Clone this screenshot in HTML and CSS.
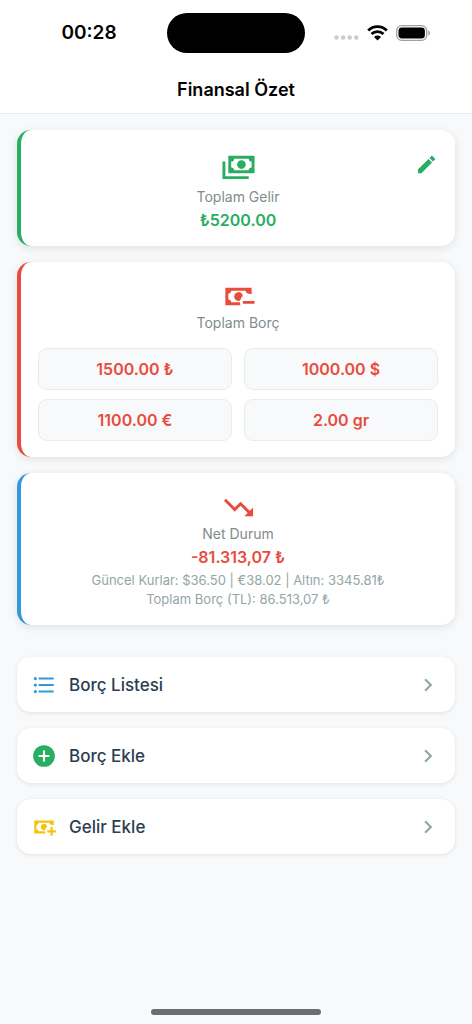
FILE: index.html
```html
<!DOCTYPE html>
<html lang="tr">
<head>
    <meta charset="UTF-8">
    <meta name="viewport" content="width=device-width, initial-scale=1.0">
    <title>Finansal Özet</title>
    <link rel="stylesheet" href="styles.css">
</head>
<body>
    <div class="status-bar">
        <span class="time">00:28</span>
        <span class="island"></span>
        <div class="status-icons">
            <svg class="signal" viewBox="0 0 25 5" width="25" height="5">
                <circle cx="2.5" cy="2.5" r="2.2"/>
                <circle cx="9.1" cy="2.5" r="2.2"/>
                <circle cx="15.7" cy="2.5" r="2.2"/>
                <circle cx="22.3" cy="2.5" r="2.2"/>
            </svg>
            <svg class="wifi" viewBox="0 0 21 16" width="21" height="16">
                <path d="M1.2 5.4a13.2 13.2 0 0 1 18.6 0M4.5 9a8.6 8.6 0 0 1 12 0"/>
                <path class="wifi-dot" d="M7 11.9a5 5 0 0 1 7 0L10.5 15.6z"/>
            </svg>
            <svg class="battery" viewBox="0 0 35 16" width="35" height="16">
                <rect class="battery-frame" x=".7" y=".7" width="30" height="14.6" rx="5"/>
                <rect x="2.5" y="2.5" width="26.4" height="11" rx="3.4"/>
                <path class="battery-cap" d="M32.3 5.3v5.4c2.3-1 2.3-4.4 0-5.4z"/>
            </svg>
        </div>
    </div>
    <header class="header">
        <h1>Finansal Özet</h1>
    </header>

    <main class="content">
        <section class="card income">
            <div class="card-top">
                <svg class="card-icon" viewBox="0 0 24 24"><path d="M5,6H23V18H5V6M14,9A3,3 0 0,1 17,12A3,3 0 0,1 14,15A3,3 0 0,1 11,12A3,3 0 0,1 14,9M9,8A2,2 0 0,1 7,10V14A2,2 0 0,1 9,16H19A2,2 0 0,1 21,14V10A2,2 0 0,1 19,8H9M1,10H3V20H19V22H1V10Z"/></svg>
                <button class="edit" aria-label="Düzenle">
                    <svg viewBox="0 0 24 24"><path d="M20.71,7.04C21.1,6.65 21.1,6 20.71,5.63L18.37,3.29C18,2.9 17.35,2.9 16.96,3.29L15.12,5.12L18.87,8.87M3,17.25V21H6.75L17.81,9.93L14.06,6.18L3,17.25Z"/></svg>
                </button>
            </div>
            <h2>Toplam Gelir</h2>
            <p class="amount">₺5200.00</p>
        </section>

        <section class="card debt">
            <svg class="card-icon" viewBox="0 0 24 24"><path d="M15 15V17H23V15M14.97 11.61C14.85 10.28 13.59 8.97 12 9C10.3 9.03 9 10.3 9 12C9 13.7 10.3 14.94 12 15C12.38 15 12.77 14.92 13.14 14.77C13.41 13.67 13.86 12.63 14.97 11.61M13 16H7C7 14.9 6.1 14 5 14V10C6.1 10 7 9.1 7 8H17C17 9.1 17.9 10 19 10V10.06C19.67 10.06 20.34 10.18 21 10.4V6H3V18H13.32C13.1 17.33 13 16.66 13 16Z"/></svg>
            <h2>Toplam Borç</h2>
            <div class="debt-grid">
                <p class="debt-item">1500.00 ₺</p>
                <p class="debt-item">1000.00 $</p>
                <p class="debt-item">1100.00 €</p>
                <p class="debt-item">2.00 gr</p>
            </div>
        </section>

        <section class="card net">
            <svg class="card-icon" viewBox="0 0 24 24"><path d="M16,18L18.29,15.71L13.41,10.83L9.41,14.83L2,7.41L3.41,6L9.41,12L13.41,8L19.71,14.29L22,12V18H16Z"/></svg>
            <h2>Net Durum</h2>
            <p class="amount">-81.313,07 ₺</p>
            <div class="rates">
                <p>Güncel Kurlar: $36.50 | €38.02 | Altın: 3345.81₺</p>
                <p>Toplam Borç (TL): 86.513,07 ₺</p>
            </div>
        </section>

        <nav class="menu">
            <button class="menu-item">
                <svg class="blue" viewBox="0 0 24 24"><path d="M7,5H21V7H7V5M7,13V11H21V13H7M4,4.5A1.5,1.5 0 0,1 5.5,6A1.5,1.5 0 0,1 4,7.5A1.5,1.5 0 0,1 2.5,6A1.5,1.5 0 0,1 4,4.5M4,10.5A1.5,1.5 0 0,1 5.5,12A1.5,1.5 0 0,1 4,13.5A1.5,1.5 0 0,1 2.5,12A1.5,1.5 0 0,1 4,10.5M7,19V17H21V19H7M4,16.5A1.5,1.5 0 0,1 5.5,18A1.5,1.5 0 0,1 4,19.5A1.5,1.5 0 0,1 2.5,18A1.5,1.5 0 0,1 4,16.5Z"/></svg>
                <span>Borç Listesi</span>
                <svg class="arrow" viewBox="0 0 24 24"><path d="M8.59,16.58L13.17,12L8.59,7.41L10,6L16,12L10,18L8.59,16.58Z"/></svg>
            </button>
            <button class="menu-item">
                <svg class="green" viewBox="0 0 24 24"><path d="M17,13H13V17H11V13H7V11H11V7H13V11H17M12,2A10,10 0 0,0 2,12A10,10 0 0,0 12,22A10,10 0 0,0 22,12A10,10 0 0,0 12,2Z"/></svg>
                <span>Borç Ekle</span>
                <svg class="arrow" viewBox="0 0 24 24"><path d="M8.59,16.58L13.17,12L8.59,7.41L10,6L16,12L10,18L8.59,16.58Z"/></svg>
            </button>
            <button class="menu-item">
                <svg class="yellow" viewBox="0 0 24 24"><path d="M15 15V17H18V20H20V17H23V15H20V12H18V15M14.97 11.61C14.85 10.28 13.59 8.97 12 9C10.3 9.03 9 10.3 9 12C9 13.7 10.3 14.94 12 15C12.38 15 12.77 14.92 13.14 14.77C13.41 13.67 13.86 12.63 14.97 11.61M13 16H7C7 14.9 6.1 14 5 14V10C6.1 10 7 9.1 7 8H17C17 9.1 17.9 10 19 10V10.06C19.67 10.06 20.34 10.18 21 10.4V6H3V18H13.32C13.1 17.33 13 16.66 13 16Z"/></svg>
                <span>Gelir Ekle</span>
                <svg class="arrow" viewBox="0 0 24 24"><path d="M8.59,16.58L13.17,12L8.59,7.41L10,6L16,12L10,18L8.59,16.58Z"/></svg>
            </button>
        </nav>
    </main>

    <footer class="home-bar"><span></span></footer>
</body>
</html>
```
FILE: styles.css
```css
*{
    box-sizing: border-box;
    margin: 0;
    padding: 0;
}
body{
    min-height: 100vh;
    display: flex;
    flex-direction: column;
    background-color: #f8f9fb;
    font-family: Inter, "Liberation Sans", sans-serif;
    color: #2c3e50;
}
svg{
    display: block;
    fill: currentColor;
}
button{
    border: none;
    background: none;
    font: inherit;
    color: inherit;
    cursor: pointer;
}
/* ---------- status bar ---------- */
.status-bar{
    display: grid;
    grid-template-columns: 1fr auto 1fr;
    align-items: center;
    height: 65px;
    background-color: #fff;
    color: #000;
}
.time{
    padding-left: 11px;
    text-align: center;
    font-size: 19px;
    font-weight: 600;
}
.island{
    width: 138px;
    height: 40px;
    border-radius: 20px;
    background-color: #000;
}
.status-icons{
    display: flex;
    align-items: center;
    justify-content: center;
    gap: 8px;
    padding-right: 13px;
}
.signal{
    margin-top: 10px;
    color: #ccc;
}
.wifi{
    fill: none;
    stroke: #000;
    stroke-width: 2.8;
}
.wifi .wifi-dot{
    fill: #000;
    stroke: none;
}
.battery-frame{
    fill: none;
    stroke: #a0a0a0;
    stroke-width: 1.3;
}
.battery-cap{
    fill: #a0a0a0;
}
/* ---------- header ---------- */
.header{
    height: 49px;
    border-bottom: 1px solid #e9ecef;
    background-color: #fff;
    color: #000;
    text-align: center;
}
.header h1{
    font-size: 18px;
    line-height: 49px;
    font-weight: 600;
}
/* ---------- cards ---------- */
.content{
    flex: 1;
    display: flex;
    flex-direction: column;
    gap: 16px;
    padding: 16px 17px;
}
.card{
    padding: 17px 17px 16px;
    border-left: 4px solid;
    border-radius: 14px;
    background-color: #fff;
    box-shadow: 0 2px 9px rgba(0, 0, 0, 0.1);
    text-align: center;
}
.card-icon{
    width: 35px;
    height: 35px;
    margin: 0 auto;
}
.card h2{
    font-size: 14px;
    line-height: 18px;
    font-weight: 400;
    color: #7f8c8d;
}
.amount{
    margin-top: 4px;
    font-size: 16px;
    line-height: 20px;
    font-weight: 600;
}
.income{
    border-color: #27ae60;
    color: #27ae60;
}
.debt, .net{
    border-color: #e74c3c;
    color: #e74c3c;
}
.net{
    border-color: #3498db;
}
.card-top{
    display: grid;
    grid-template-columns: 1fr auto 1fr;
    align-items: center;
    margin-bottom: 6px;
}
.card-top .card-icon{
    grid-column: 2;
}
.edit{
    justify-self: end;
}
.edit svg{
    width: 23px;
    height: 23px;
}
.debt-grid{
    display: grid;
    grid-template-columns: 1fr 1fr;
    gap: 9px 12px;
    margin-top: 16px;
}
.debt-item{
    border: 1px solid #e9ecef;
    border-radius: 9px;
    background-color: #f8f9fb;
    font-size: 16px;
    line-height: 40px;
    font-weight: 600;
}
.rates{
    margin-top: 4px;
    font-size: 13px;
    line-height: 19px;
    color: #95a5a6;
}
/* ---------- menu ---------- */
.menu{
    display: flex;
    flex-direction: column;
    gap: 16px;
    margin-top: 16px;
}
.menu-item{
    display: flex;
    align-items: center;
    gap: 12px;
    height: 55px;
    padding: 0 14px;
    border-radius: 14px;
    background-color: #fff;
    box-shadow: 0 1px 4px rgba(0, 0, 0, 0.1);
    font-size: 17px;
    font-weight: 500;
    text-align: left;
}
.menu-item svg{
    width: 26px;
    height: 26px;
}
.menu-item span{
    flex: 1;
}
.blue{
    color: #3498db;
}
.green{
    color: #27ae60;
}
.yellow{
    color: #f1c40f;
}
.arrow{
    color: #95a5a6;
}
/* ---------- home indicator ---------- */
.home-bar{
    display: flex;
    justify-content: center;
    padding-bottom: 9px;
}
.home-bar span{
    width: 36%;
    height: 6px;
    border-radius: 3px;
    background-color: #6b6e6e;
}
```
